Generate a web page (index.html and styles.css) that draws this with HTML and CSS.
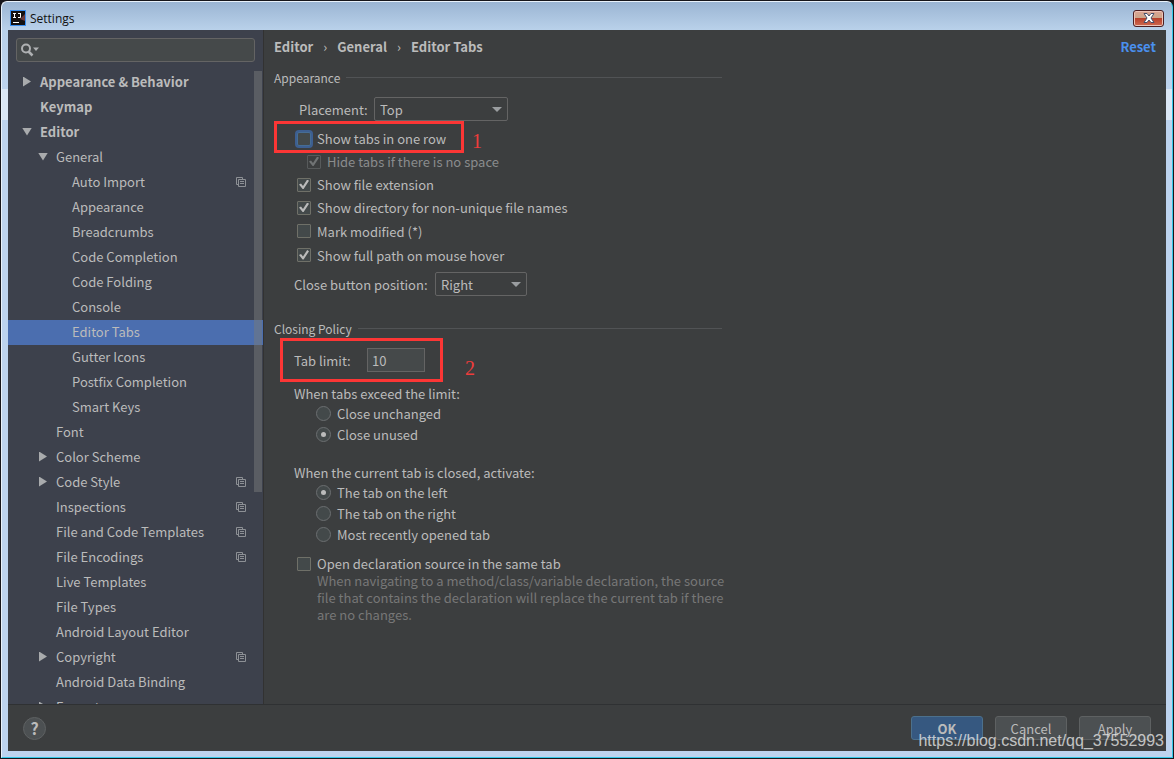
FILE: index.html
```html
<!DOCTYPE html>
<html lang="en">

<head>
    <meta charset="UTF-8">
    <meta name="viewport" content="width=device-width, initial-scale=1.0">
    <title>Settings</title>
    <link rel="stylesheet" href="styles.css">
</head>

<body>
    <svg width="0" height="0" class="defs">
        <symbol id="copy" viewBox="0 0 10 10">
            <path d="M2 7.5H.5V.5H6.5V2M2.5 2.5H9.5V9.5H2.5zM4 4.5H8M4 6.5H8" fill="none" stroke="#8d9095" />
        </symbol>
    </svg>

    <div class="window">
        <header class="titlebar">
            <svg class="logo" width="16" height="16" viewBox="0 0 16 16">
                <rect x=".5" y=".5" width="15" height="15" fill="#14100f" stroke="#3a8ff0" />
                <path d="M15 4V11L10 9z" fill="#6b3a3c" />
                <path d="M3 3.500H6M4.500 3V8M3 7.500H6M8 3.500H11M10.500 3V7.500H8" fill="none" stroke="#fff" />
                <path d="M3 12.500H9" stroke="#fff" />
            </svg>
            <h1>Settings</h1>
            <button class="close" aria-label="Close">
                <svg width="12" height="10" viewBox="0 0 12 10">
                    <path d="M1 .5H4L6 3L8 .5H11L8 5L11 9.500H8L6 7L4 9.500H1L4 5z" fill="#fff" stroke="#46506e" />
                </svg>
            </button>
        </header>

        <div class="body">
            <aside class="sidebar">
                <div class="search">
                    <svg width="20" height="14" viewBox="0 0 20 14">
                        <circle cx="5" cy="5.500" r="4" fill="none" stroke="#afb1b3" stroke-width="2" />
                        <path d="M7.500 8.500L11.500 12.500" stroke="#afb1b3" stroke-width="2.500" />
                        <path d="M12 4.500H18L15 8z" fill="#afb1b3" />
                    </svg>
                    <input type="text" aria-label="Search settings">
                </div>

                <nav class="tree">
                    <a href="#" class="top closed">Appearance &amp; Behavior</a>
                    <a href="#" class="top">Keymap</a>
                    <a href="#" class="top open">Editor</a>
                    <a href="#" class="group open">General</a>
                    <a href="#" class="leaf">Auto Import<svg><use href="#copy" /></svg></a>
                    <a href="#" class="leaf">Appearance</a>
                    <a href="#" class="leaf">Breadcrumbs</a>
                    <a href="#" class="leaf">Code Completion</a>
                    <a href="#" class="leaf">Code Folding</a>
                    <a href="#" class="leaf">Console</a>
                    <a href="#" class="leaf selected">Editor Tabs</a>
                    <a href="#" class="leaf">Gutter Icons</a>
                    <a href="#" class="leaf">Postfix Completion</a>
                    <a href="#" class="leaf">Smart Keys</a>
                    <a href="#" class="group">Font</a>
                    <a href="#" class="group closed">Color Scheme</a>
                    <a href="#" class="group closed">Code Style<svg><use href="#copy" /></svg></a>
                    <a href="#" class="group">Inspections<svg><use href="#copy" /></svg></a>
                    <a href="#" class="group">File and Code Templates<svg><use href="#copy" /></svg></a>
                    <a href="#" class="group">File Encodings<svg><use href="#copy" /></svg></a>
                    <a href="#" class="group">Live Templates</a>
                    <a href="#" class="group">File Types</a>
                    <a href="#" class="group">Android Layout Editor</a>
                    <a href="#" class="group closed">Copyright<svg><use href="#copy" /></svg></a>
                    <a href="#" class="group">Android Data Binding</a>
                    <a href="#" class="group closed">Emmet</a>
                    <span class="thumb"></span>
                </nav>
            </aside>

            <main class="content">
                <div class="crumbs">
                    <span>Editor</span><i>›</i><span>General</span><i>›</i><span>Editor Tabs</span>
                    <a href="#" class="reset">Reset</a>
                </div>

                <section>
                    <h2>Appearance</h2>
                    <div class="field placement">
                        <label for="placement">Placement:</label>
                        <div class="select">
                            <select id="placement">
                                <option>Top</option>
                                <option>Bottom</option>
                                <option>Left</option>
                                <option>Right</option>
                            </select>
                        </div>
                    </div>
                    <div class="marked mark-row">
                        <label class="check"><input type="checkbox" class="focused">Show tabs in one row</label>
                        <span class="mark">1</span>
                    </div>
                    <label class="check nested"><input type="checkbox" checked disabled>Hide tabs if there is no space</label>
                    <label class="check"><input type="checkbox" checked>Show file extension</label>
                    <label class="check"><input type="checkbox" checked>Show directory for non-unique file names</label>
                    <label class="check tall"><input type="checkbox">Mark modified (*)</label>
                    <label class="check tall"><input type="checkbox" checked>Show full path on mouse hover</label>
                    <div class="field position">
                        <label for="position">Close button position:</label>
                        <div class="select">
                            <select id="position">
                                <option>Right</option>
                                <option>Left</option>
                                <option>None</option>
                            </select>
                        </div>
                    </div>
                </section>

                <section>
                    <h2>Closing Policy</h2>
                    <div class="marked mark-limit">
                        <div class="field limit">
                            <label for="limit">Tab limit:</label>
                            <input type="text" id="limit" value="10">
                        </div>
                        <span class="mark">2</span>
                    </div>
                    <div class="radios" role="radiogroup" aria-labelledby="exceed">
                        <p id="exceed">When tabs exceed the limit:</p>
                        <label class="radio"><input type="radio" name="exceed">Close unchanged</label>
                        <label class="radio"><input type="radio" name="exceed" checked>Close unused</label>
                    </div>
                    <div class="radios" role="radiogroup" aria-labelledby="activate">
                        <p id="activate">When the current tab is closed, activate:</p>
                        <label class="radio"><input type="radio" name="activate" checked>The tab on the left</label>
                        <label class="radio"><input type="radio" name="activate">The tab on the right</label>
                        <label class="radio"><input type="radio" name="activate">Most recently opened tab</label>
                    </div>
                    <label class="check"><input type="checkbox">Open declaration source in the same tab</label>
                    <p class="hint">When navigating to a method/class/variable declaration, the source file that contains the declaration will replace the current tab if there are no changes.</p>
                </section>
            </main>
        </div>

        <footer class="footer">
            <button class="help" aria-label="Help">?</button>
            <button class="btn primary">OK</button>
            <button class="btn">Cancel</button>
            <button class="btn">Apply</button>
        </footer>
    </div>
    <div class="watermark">https://blog.csdn.net/qq_37552993</div>
</body>

</html>
```

FILE: styles.css
```css
*,
*::before,
*::after {
    box-sizing: border-box;
}

body {
    margin: 0;
    height: 100vh;
    padding: 1px;
    background: #17161b;
    color: #bbbbbb;
    font-family: "Noto Sans CJK SC", "Noto Sans", sans-serif;
    font-size: 13px;
    line-height: 17px;
    overflow: hidden;
}

input,
select,
button {
    margin: 0;
    font: inherit;
    color: inherit;
}

a {
    color: inherit;
    text-decoration: none;
}

.defs {
    position: absolute;
}

/* window frame */
.window {
    display: flex;
    flex-direction: column;
    height: 100%;
    padding: 0 6px 6px;
    border: 1px solid #e9f2fb;
    border-right-color: #35c8e8;
    border-bottom-color: #35c8e8;
    border-radius: 6px 6px 0 0;
    background: linear-gradient(#9bb5d3 0, #b9d1ea 28px, #bdd3ee 87px, #dbe7f5 87px, #dbe7f5 118px, #bdd3ee 118px);
}

.titlebar {
    flex: none;
    display: flex;
    align-items: center;
    gap: 4px;
    height: 28px;
    padding: 4px 2px 0;
    color: #111;
}

.titlebar h1 {
    flex: 1;
    margin: 0;
    font-family: "Open Sans", sans-serif;
    font-size: 12px;
    font-weight: normal;
}

.close {
    display: flex;
    align-items: center;
    justify-content: center;
    width: 31px;
    height: 17px;
    padding: 0;
    border: 1px solid #4b1f22;
    border-radius: 3px;
    background: linear-gradient(#dca493 0, #c9a68a 50%, #b8412c 50%, #cf6a50);
    box-shadow: inset 0 0 0 1px #eec4b8;
}

.body {
    flex: 1;
    display: flex;
    min-height: 0;
}

/* settings tree */
.sidebar {
    flex: none;
    display: flex;
    flex-direction: column;
    width: 256px;
    padding-top: 8px;
    border-right: 1px solid #323232;
    background: #3d414c;
}

.search {
    flex: none;
    display: flex;
    align-items: center;
    height: 24px;
    margin: 0 8px 8px;
    padding: 0 4px;
    border: 1px solid #646464;
    border-radius: 3px;
    background: #45494a;
}

.search input {
    flex: 1;
    min-width: 0;
    border: none;
    outline: none;
    background: none;
}

.tree {
    position: relative;
    flex: 1;
    overflow: hidden;
}

.tree a {
    display: flex;
    align-items: center;
    height: 25px;
    padding-right: 17px;
    padding-bottom: 2px;
}

.tree a::before {
    content: "";
    flex: none;
    width: 8px;
    height: 10px;
    margin-right: 9px;
}

.tree .closed::before {
    background: #a9abad;
    clip-path: polygon(0 0, 100% 50%, 0 100%);
}

.tree .open::before {
    width: 10px;
    height: 8px;
    margin-left: -1px;
    margin-right: 8px;
    background: #a9abad;
    clip-path: polygon(0 0, 100% 0, 50% 100%);
}

.tree .top {
    padding-left: 15px;
    font-weight: bold;
}

.tree .group {
    padding-left: 31px;
}

.tree .leaf {
    padding-left: 47px;
}

.tree .selected {
    background: #4b6eaf;
}

.tree svg {
    width: 10px;
    height: 10px;
    margin-left: auto;
}

.thumb {
    position: absolute;
    top: 1px;
    right: 1px;
    width: 8px;
    height: 421px;
    background: rgba(120, 122, 122, 0.5);
}

/* right pane */
.content {
    flex: 1;
    min-width: 0;
    padding: 8px 10px;
    background: #3c3e3f;
    overflow: hidden;
}

.content section {
    max-width: 448px;
    margin-bottom: 24px;
}

.crumbs {
    display: flex;
    margin-bottom: 14px;
    font-weight: bold;
}

.crumbs i {
    width: 24px;
    font-style: normal;
    font-weight: normal;
    text-align: center;
}

.reset {
    margin-left: auto;
    color: #4a90ee;
}

h2 {
    display: flex;
    align-items: center;
    gap: 6px;
    margin: 0;
    font-size: 12px;
    font-weight: normal;
}

h2::after {
    content: "";
    flex: 1;
    height: 1px;
    background: #515355;
}

.field {
    display: flex;
    align-items: center;
    height: 24px;
}

.placement {
    margin: 11px 0 0 25px;
}

.placement label {
    width: 75px;
}

.position {
    margin: 5px 0 0 20px;
}

.position label {
    width: 141px;
}

.select {
    position: relative;
}

.placement .select {
    width: 134px;
}

.position .select {
    width: 92px;
}

.select::after {
    content: "";
    position: absolute;
    top: 10px;
    right: 6px;
    width: 10px;
    height: 5px;
    background: #9a9da0;
    clip-path: polygon(0 0, 100% 0, 50% 100%);
    pointer-events: none;
}

select {
    display: block;
    appearance: none;
    width: 100%;
    height: 24px;
    padding: 0 5px;
    border: 1px solid #646464;
    border-radius: 2px;
    background: #3c3e3f;
}

.check,
.radio {
    display: flex;
    align-items: center;
    gap: 6px;
    height: 23px;
    margin-left: 23px;
}

.tall {
    height: 24px;
}

.radio {
    height: 21px;
    margin-left: 42px;
}

.nested {
    margin-left: 33px;
    color: #8a8c8d;
}

.check input,
.radio input {
    appearance: none;
    display: grid;
    place-items: center;
    flex: none;
    width: 14px;
    height: 14px;
    border: 1px solid #6f7068;
    border-radius: 1px;
    background: #43494a;
}

.check input:checked::before {
    content: "";
    width: 10px;
    height: 10px;
    background: #bbbbbb;
    clip-path: polygon(0 50%, 20% 40%, 40% 65%, 82% 0, 100% 12%, 46% 95%, 36% 95%);
}

.check input:disabled {
    border-color: #575a5b;
    background: #3c3e3f;
}

.check input:disabled::before {
    background: #707374;
}

.check .focused {
    border-color: #466d94;
    border-radius: 2px;
    box-shadow: 0 0 0 2px #3d5f91;
}

.radio input {
    width: 15px;
    height: 15px;
    border-color: #6b6e70;
    border-radius: 50%;
}

.radio input:checked::before {
    content: "";
    width: 5px;
    height: 5px;
    border-radius: 50%;
    background: #bbbbbb;
}

.limit {
    margin: 11px 0 13px 20px;
}

.limit label {
    width: 73px;
}

.limit input {
    width: 58px;
    height: 24px;
    padding: 0 4px;
    border: 1px solid #646464;
    background: #45494a;
}

/* red annotation frames */
.marked {
    position: relative;
    margin-top: 6px;
}

.marked::before {
    content: "";
    position: absolute;
    border: 3px solid #fc3635;
}

.mark-row::before {
    top: -6px;
    left: 0;
    width: 190px;
    height: 32px;
}

.mark-limit::before {
    top: -10px;
    left: 6px;
    width: 163px;
    height: 44px;
}

.mark {
    position: absolute;
    top: 6px;
    left: 198px;
    color: #f03c3b;
    font-family: "Liberation Serif", serif;
    font-size: 20px;
}

.mark-limit .mark {
    top: 12px;
    left: 191px;
}

.radios {
    margin-bottom: 19px;
}

.radios p {
    margin: 0 0 1px 20px;
}

.radios + .check {
    margin-top: -12px;
}

.hint {
    margin: -3px -12px 0 43px;
    color: #777777;
}

/* bottom bar */
.footer {
    flex: none;
    display: flex;
    align-items: center;
    gap: 12px;
    height: 47px;
    padding: 0 15px;
    border-top: 1px solid #2f3133;
    background: #3c3e3f;
}

.help {
    width: 23px;
    height: 23px;
    margin-right: auto;
    padding: 0;
    border: 1px solid #5e6162;
    border-radius: 50%;
    background: #4c5052;
    font-size: 16px;
    font-weight: bold;
    line-height: 20px;
}

.btn {
    width: 72px;
    height: 24px;
    padding: 0;
    border: 1px solid #5e6162;
    border-radius: 3px;
    background: #4c5052;
}

.primary {
    border-color: #4c708c;
    background: #365880;
    font-weight: bold;
}

.watermark {
    position: absolute;
    right: 10px;
    bottom: 10px;
    color: rgba(230, 230, 230, 0.8);
    font-family: "Liberation Sans", sans-serif;
    font-size: 16px;
    pointer-events: none;
}
```
